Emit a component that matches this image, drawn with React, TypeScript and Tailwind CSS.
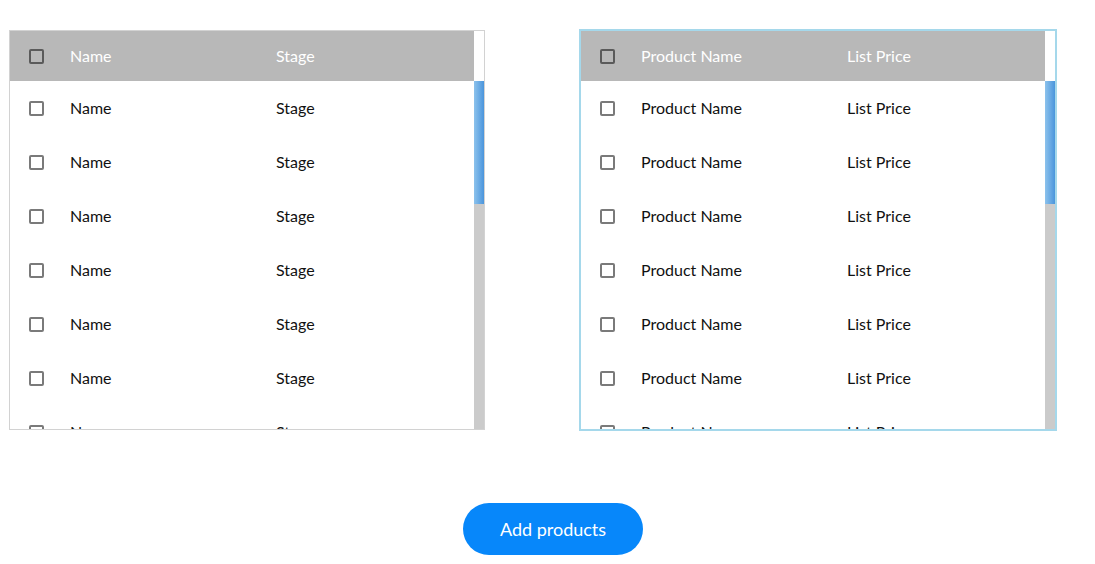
import React from "react";

type Table = { cols: [string, string]; border: string };

const Box = ({ header }: { header?: boolean }) => (
  <span
    className={
      "block w-[15px] h-[15px] rounded-[2px] border-2 " +
      (header ? "border-[#5a5a5a]" : "border-[#7a7a7a] bg-white")
    }
  />
);

function DataTable({ cols, border }: Table) {
  const rows = Array.from({ length: 7 });
  return (
    <div className={"w-[476px] h-[400px] overflow-hidden bg-white flex " + border}>
      <div className="flex-1 flex flex-col">
        <div className="h-[50px] shrink-0 bg-[#b8b8b8] flex items-center text-white text-[16px]">
          <div className="w-[60px] pl-[19px]">
            <Box header />
          </div>
          <div className="w-[206px]">{cols[0]}</div>
          <div>{cols[1]}</div>
        </div>
        {rows.map((_, i) => (
          <div key={i} className="h-[54px] shrink-0 flex items-center text-[16px] text-[#111]">
            <div className="w-[60px] pl-[19px]">
              <Box />
            </div>
            <div className="w-[206px]">{cols[0]}</div>
            <div>{cols[1]}</div>
          </div>
        ))}
      </div>
      <div className="w-[10px] flex flex-col">
        <div className="h-[50px] bg-white" />
        <div className="h-[123px] bg-gradient-to-r from-[#8cc2ec] to-[#4a95dc]" />
        <div className="flex-1 bg-[#cbcbcb]" />
      </div>
    </div>
  );
}

export default function App() {
  return (
    <div
      className="w-[1095px] h-[564px] bg-white overflow-hidden"
      style={{ fontFamily: "Lato, 'Open Sans', sans-serif" }}
    >
      <div className="flex items-start pl-[9px] pt-[30px] gap-[94px]">
        <DataTable cols={["Name", "Stage"]} border="border border-[#d2d2d2]" />
        <div className="-mt-px">
          <DataTable
            cols={["Product Name", "List Price"]}
            border="border-2 border-[#a5d8eb] w-[478px] h-[402px]"
          />
        </div>
      </div>
      <div className="flex pl-[463px] pt-[72px]">
        <button className="w-[180px] h-[52px] rounded-full bg-[#0787fa] text-white text-[18px]">
          Add products
        </button>
      </div>
    </div>
  );
}
